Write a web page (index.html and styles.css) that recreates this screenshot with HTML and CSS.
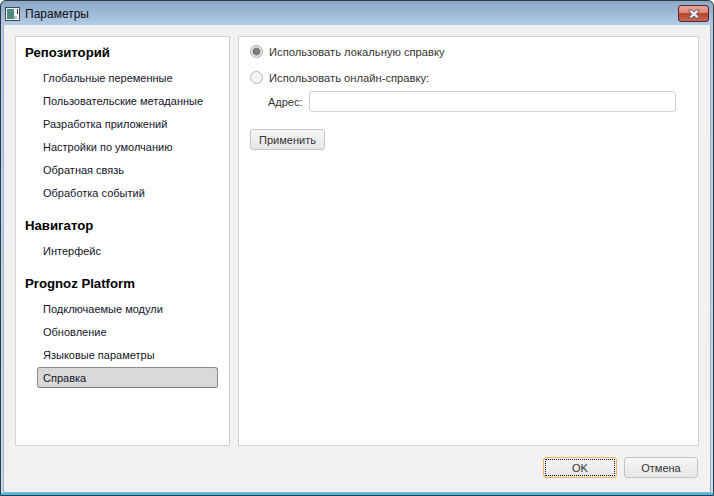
FILE: index.html
```html
<!DOCTYPE html>
<html lang="ru">
<head>
<meta charset="utf-8">
<title>Параметры</title>
<link rel="stylesheet" href="styles.css">
</head>
<body>
<div class="window">
  <header class="titlebar">
    <svg class="app-icon" width="16" height="16" viewBox="0 0 16 16">
      <rect x="0.5" y="1.5" width="14" height="13" fill="#f2f2f2" stroke="#4a4a4a"/>
      <rect x="2" y="3" width="7" height="10" fill="#4d8a85"/>
      <rect x="9" y="10" width="3" height="3" fill="#b8c4c4"/>
      <rect x="12" y="3" width="1" height="5" fill="#333"/>
    </svg>
    <span class="title">Параметры</span>
    <button class="close" aria-label="Закрыть">
      <svg width="14" height="10" viewBox="0 0 14 10">
        <path d="M2 1h3l2 2 2-2h3v1L9.500 5 12 8v1H9L7 7 5 9H2V8l2.500-3L2 2z" fill="#e8e8ec" stroke="#5a4a55" stroke-width="0.8"/>
      </svg>
    </button>
  </header>
  <div class="client">
    <div class="panes">
      <nav class="sidebar">
        <h2 class="group">Репозиторий</h2>
        <a class="item">Глобальные переменные</a>
        <a class="item">Пользовательские метаданные</a>
        <a class="item">Разработка приложений</a>
        <a class="item">Настройки по умолчанию</a>
        <a class="item">Обратная связь</a>
        <a class="item">Обработка событий</a>
        <h2 class="group">Навигатор</h2>
        <a class="item">Интерфейс</a>
        <h2 class="group">Prognoz Platform</h2>
        <a class="item">Подключаемые модули</a>
        <a class="item">Обновление</a>
        <a class="item">Языковые параметры</a>
        <a class="item active">Справка</a>
      </nav>
      <main class="content">
        <div class="radio-row"><span class="radio checked"></span><span class="radio-label">Использовать локальную справку</span></div>
        <div class="radio-row"><span class="radio"></span><span class="radio-label">Использовать онлайн-справку:</span></div>
        <div class="address-row"><span>Адрес:</span><span class="input"></span></div>
        <button class="btn apply">Применить</button>
      </main>
    </div>
    <footer class="footer">
      <button class="btn dialog default"><span class="focus">OK</span></button>
      <button class="btn dialog">Отмена</button>
    </footer>
  </div>
</div>
</body>
</html>
```
FILE: styles.css
```css
html, body {
  margin: 0;
  padding: 0;
  width: 714px;
  height: 496px;
  overflow: hidden;
}
* { box-sizing: border-box; }
body {
  font-family: "Liberation Sans", "Open Sans", sans-serif;
  font-size: 11px;
  color: #1c1c1c;
}
.window {
  width: 714px;
  height: 496px;
  display: flex;
  flex-direction: column;
  background: linear-gradient(180deg, #8ba8c8 0, #b4cce6 25px, #c4def0 100%);
  border: 1px solid #2e3a44;
  border-radius: 6px 6px 0 0;
  padding: 0 2px 2px 2px;
  box-shadow: inset 0 -2px 0 #3fc0e8;
}
.titlebar {
  height: 24px;
  display: flex;
  align-items: center;
  padding: 0 0 0 2px;
  flex: none;
}
.app-icon { margin-right: 4px; margin-top: 2px; }
.title {
  font-size: 12px;
  color: #101010;
  margin-top: 2px;
}
.close {
  margin-left: auto;
  margin-right: 2px;
  align-self: flex-start;
  margin-top: 4px;
  width: 31px;
  height: 17px;
  padding: 0;
  border: 1px solid #5a2330;
  border-radius: 3px;
  background: linear-gradient(180deg, #e8a598 0, #d98a7a 45%, #b8432c 50%, #c46a55 100%);
  display: flex;
  align-items: center;
  justify-content: center;
}
.client {
  flex: 1;
  background: #f1f1f1;
  display: flex;
  flex-direction: column;
  padding: 11px 11px 14px 11px;
  border: 1px solid #9ab0c6;
  border-top: 0;
  min-height: 0;
}
.panes {
  flex: none;
  height: 410px;
  display: flex;
  gap: 8px;
}
.sidebar {
  width: 215px;
  background: #fff;
  border: 1px solid #d2d2d2;
  padding: 4px 11px 0 21px;
  display: flex;
  flex-direction: column;
}
.group {
  margin: 0 0 3px -12px;
  height: 23px;
  line-height: 23px;
  font-size: 13.200px;
  font-weight: 700;
  color: #000;
}
.item + .group { margin-top: 9px; }
.item {
  height: 23px;
  line-height: 23px;
  padding-left: 6px;
  color: #14142a;
}
.active {
  background: #d9d9d9;
  border: 1px solid #8c8c8c;
  border-bottom-color: #777;
  border-radius: 3px;
  line-height: 21px;
  height: 21px;
  padding-left: 5px;
}
.content {
  flex: 1;
  background: #fff;
  border: 1px solid #d2d2d2;
  padding: 3px 22px 0 11px;
  display: flex;
  flex-direction: column;
  align-items: flex-start;
  color: #333;
}
.radio-row {
  height: 23px;
  display: flex;
  align-items: center;
  gap: 6px;
  margin-bottom: 3px;
}
.radio-label {
  font-size: 11.200px;
  padding-top: 1px;
}
.radio {
  width: 13px;
  height: 13px;
  border-radius: 50%;
  border: 1px solid #b8b8b8;
  background: #f4f4f4;
  display: block;
}
.radio.checked {
  background: radial-gradient(circle, #7c7c7c 0 3.500px, #ececec 4.500px);
  border-color: #a8a8a8;
}
.address-row {
  width: 100%;
  display: flex;
  align-items: center;
  gap: 6px;
  padding-left: 18px;
  height: 21px;
  margin-top: -1px;
}
.input {
  flex: 1;
  height: 21px;
  background: #fff;
  border: 1px solid #cfcfcf;
  border-radius: 3px;
}
.btn {
  font: inherit;
  color: #333;
  height: 21px;
  border: 1px solid #c4c4c4;
  border-radius: 3px;
  background: linear-gradient(180deg, #f6f6f6, #e6e6e6);
  padding: 0;
}
.apply {
  width: 75px;
  margin-top: 17px;
}
.footer {
  flex: 1;
  display: flex;
  justify-content: flex-end;
  align-items: flex-end;
  gap: 7px;
  padding-right: 1px;
}
.dialog {
  width: 74px;
}
.default {
  border-color: #f0b060;
  padding: 1px;
}
.focus {
  display: flex;
  height: 100%;
  align-items: center;
  justify-content: center;
  border: 1px dotted #111;
}
```
